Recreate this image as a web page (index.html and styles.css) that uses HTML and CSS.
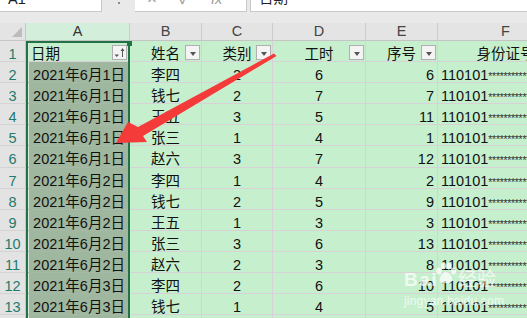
FILE: index.html
```html
<!DOCTYPE html>
<html lang="zh">
<head>
<meta charset="utf-8">
<title>Sheet</title>
<link rel="stylesheet" href="styles.css">
</head>
<body>
<div class="top">
  <div class="namebox">A1</div>
  <div class="dots"><span class="dot"></span></div>
  <div class="fbtns"><span class="fx1">×</span><span class="fx2">✓</span><span class="fx3">fx</span></div>
  <div class="fbox">日期</div>
</div>
<div class="band"></div>
<div class="sheet">
  <div class="corner"><span class="tri"></span></div>
  <div class="ch sel">A</div><div class="ch">B</div><div class="ch">C</div><div class="ch">D</div><div class="ch">E</div><div class="ch">F</div>

  <div class="rh">1</div>
  <div class="c s act hd lf">日期<span class="fb sort"><svg width="13" height="13" viewBox="0 0 13 13"><polygon points="1.5,8.5 6,8.5 3.75,11" fill="#555"/><line x1="9.5" y1="3" x2="9.5" y2="11" stroke="#555" stroke-width="1"/><polygon points="7.5,5 9.5,2 11.5,5" fill="#555"/></svg></span></div>
  <div class="c hd ctr">姓名<span class="fb"></span></div>
  <div class="c hd ctr">类别<span class="fb"></span></div>
  <div class="c hd ctr">工时<span class="fb"></span></div>
  <div class="c hd ctr">序号<span class="fb"></span></div>
  <div class="c hd ctr">身份证号</div>

  <div class="rh">2</div><div class="c s rt">2021年6月1日</div><div class="c ctr">李四</div><div class="c ctr">2</div><div class="c ctr">6</div><div class="c rt">6</div><div class="c id">110101<span class="st">************</span></div>
  <div class="rh">3</div><div class="c s rt">2021年6月1日</div><div class="c ctr">钱七</div><div class="c ctr">2</div><div class="c ctr">7</div><div class="c rt">7</div><div class="c id">110101<span class="st">************</span></div>
  <div class="rh">4</div><div class="c s rt">2021年6月1日</div><div class="c ctr">王五</div><div class="c ctr">3</div><div class="c ctr">5</div><div class="c rt">11</div><div class="c id">110101<span class="st">************</span></div>
  <div class="rh">5</div><div class="c s rt">2021年6月1日</div><div class="c ctr">张三</div><div class="c ctr">1</div><div class="c ctr">4</div><div class="c rt">1</div><div class="c id">110101<span class="st">************</span></div>
  <div class="rh">6</div><div class="c s rt">2021年6月1日</div><div class="c ctr">赵六</div><div class="c ctr">3</div><div class="c ctr">7</div><div class="c rt">12</div><div class="c id">110101<span class="st">************</span></div>
  <div class="rh">7</div><div class="c s rt">2021年6月2日</div><div class="c ctr">李四</div><div class="c ctr">1</div><div class="c ctr">4</div><div class="c rt">2</div><div class="c id">110101<span class="st">************</span></div>
  <div class="rh">8</div><div class="c s rt">2021年6月2日</div><div class="c ctr">钱七</div><div class="c ctr">2</div><div class="c ctr">5</div><div class="c rt">9</div><div class="c id">110101<span class="st">************</span></div>
  <div class="rh">9</div><div class="c s rt">2021年6月2日</div><div class="c ctr">王五</div><div class="c ctr">1</div><div class="c ctr">3</div><div class="c rt">3</div><div class="c id">110101<span class="st">************</span></div>
  <div class="rh">10</div><div class="c s rt">2021年6月2日</div><div class="c ctr">张三</div><div class="c ctr">3</div><div class="c ctr">6</div><div class="c rt">13</div><div class="c id">110101<span class="st">************</span></div>
  <div class="rh">11</div><div class="c s rt">2021年6月2日</div><div class="c ctr">赵六</div><div class="c ctr">2</div><div class="c ctr">3</div><div class="c rt">8</div><div class="c id">110101<span class="st">************</span></div>
  <div class="rh">12</div><div class="c s rt">2021年6月3日</div><div class="c ctr">李四</div><div class="c ctr">2</div><div class="c ctr">6</div><div class="c rt">10</div><div class="c id">110101<span class="st">************</span></div>
  <div class="rh">13</div><div class="c s rt">2021年6月3日</div><div class="c ctr">钱七</div><div class="c ctr">1</div><div class="c ctr">4</div><div class="c rt">5</div><div class="c id">110101<span class="st">************</span></div>
  <div class="rh">14</div><div class="c s rt"></div><div class="c"></div><div class="c"></div><div class="c"></div><div class="c"></div><div class="c"></div>

  <div class="selbox"><span class="handle"></span></div>
</div>

<svg class="arrow" width="527" height="318" viewBox="0 0 527 318">
  <polygon points="116,143 128,122 138,127 274,53.5 276.5,56 143,136 147,142" fill="#f53a3a"/>
</svg>

<div class="wm">
  <div class="wm-row">
    <span class="wm-bai">Bai</span>
    <svg class="wm-paw" width="22" height="24" viewBox="0 0 22 24">
      <ellipse cx="4" cy="9" rx="2.6" ry="3.4" fill="#fff"/>
      <ellipse cx="8.5" cy="3.8" rx="2.6" ry="3.4" fill="#fff"/>
      <ellipse cx="14" cy="3.8" rx="2.6" ry="3.4" fill="#fff"/>
      <ellipse cx="18.5" cy="9" rx="2.6" ry="3.4" fill="#fff"/>
      <path d="M11 10 C7 10 4 16 5 19 C6 22 9 21 11 21 C13 21 16 22 17 19 C18 16 15 10 11 10 Z" fill="#fff"/>
    </svg>
    <span class="wm-cn">经验</span>
  </div>
  <div class="wm-url">jingyan.baidu.com</div>
</div>
</body>
</html>
```

FILE: styles.css
```css
html, body {
  margin: 0;
  padding: 0;
}
body {
  width: 527px;
  height: 318px;
  overflow: hidden;
  position: relative;
  background: #e9e9e9;
  font-family: "Liberation Sans", "Noto Sans CJK SC", sans-serif;
  font-size: 14.5px;
  color: #111;
}

/* formula bar (partially scrolled off the top) */
.top {
  display: flex;
  height: 24px;
  margin-top: -12px;
  line-height: 16px;
}
.namebox {
  box-sizing: border-box;
  width: 102px;
  background: #fff;
  border-right: 1px solid #c8c8c8;
  border-bottom: 1px solid #c8c8c8;
  padding: 2.5px 0 0 8px;
  color: #222;
}
.dots {
  width: 33px;
  display: flex;
  justify-content: center;
  padding-top: 14px;
  box-sizing: border-box;
}
.dot {
  width: 2px;
  height: 2px;
  background: #8a8a8a;
}
.fbtns {
  box-sizing: border-box;
  width: 112px;
  background: #fff;
  border-bottom: 1px solid #c8c8c8;
  border-right: 1px solid #c8c8c8;
  display: flex;
  padding: 2.5px 0 0 12px;
  color: #9a9a9a;
}
.fx1 { font-size: 17px; }
.fx2 { margin-left: 22px; font-size: 16px; }
.fx3 { margin-left: 21px; font-style: italic; }
.fbox {
  flex: 1;
  margin-left: 3px;
  background: #fff;
  border-left: 1px solid #c8c8c8;
  border-bottom: 1px solid #c8c8c8;
  padding: 2px 0 0 8px;
  color: #222;
}
.band {
  height: 11px;
}

/* sheet grid */
.sheet {
  position: relative;
  display: grid;
  grid-template-columns: 26px 104px 72px 71px 93px 72px 136px;
  grid-template-rows: 18px repeat(14, 21.1px);
}
.sheet > div {
  box-sizing: border-box;
}
.corner {
  background: #e4e4e4;
  border-right: 1px solid #c6c6c6;
  border-bottom: 1px solid #c6c6c6;
  position: relative;
}
.tri {
  position: absolute;
  right: 3px;
  bottom: 3px;
  width: 0;
  height: 0;
  border-left: 10px solid transparent;
  border-bottom: 10px solid #bcbcbc;
}
.ch {
  background: #e4e4e4;
  border-right: 1px solid #cbcbcb;
  border-bottom: 1px solid #c4c4c4;
  text-align: center;
  line-height: 17px;
  color: #444;
}
.ch.sel {
  background: #d3eedb;
  color: #333;
}
.rh {
  background: #e3e3e3;
  border-right: 1px solid #c6c6c6;
  border-bottom: 1px solid #d3d3d3;
  text-align: center;
  padding-top: 5px;
  line-height: 16px;
  color: #1f7a6c;
}
.c {
  position: relative;
  background: #c6efce;
  border-right: 1px solid #d8d2d8;
  border-bottom: 1px solid #d8d2d8;
  padding-top: 5px;
  line-height: 16px;
  white-space: nowrap;
  overflow: hidden;
}
.ctr { text-align: center; }
.rt { text-align: right; padding-right: 3px; }
.lf { text-align: left; padding-left: 5px; }
.id { padding-left: 3px; overflow: visible; }
.st {
  font-size: 10.5px;
  letter-spacing: -0.3px;
  color: #333;
}
.s {
  background: #a0b79f;
  border-bottom-color: #a6b9a6;
  box-shadow: inset 3px 0 0 #dfeadf;
  padding-right: 4px;
}
.s.act {
  background: #c6efce;
  border-bottom-color: #d8d2d8;
}

/* filter buttons */
.fb {
  position: absolute;
  right: 1px;
  top: 4px;
  width: 15px;
  height: 15px;
  box-sizing: border-box;
  border: 1px solid #b0b0b0;
  background: #f4f4f4;
}
.fb::after {
  content: "";
  position: absolute;
  left: 3.5px;
  top: 5.5px;
  border-left: 3.5px solid transparent;
  border-right: 3.5px solid transparent;
  border-top: 4px solid #555;
}
.fb.sort {
  right: 2px;
}
.fb.sort::after {
  display: none;
}
.fb.sort svg {
  display: block;
}

/* selection overlay */
.selbox {
  position: absolute;
  left: 26px;
  top: 18px;
  width: 104px;
  height: 300px;
  border: 2px solid #217346;
  border-bottom: none;
  pointer-events: none;
}
.handle {
  position: absolute;
  left: 99px;
  top: -2px;
  width: 5px;
  height: 5px;
  background: #217346;
}

/* annotation arrow */
.arrow {
  position: absolute;
  left: 0;
  top: 0;
  pointer-events: none;
}

/* watermark */
.wm {
  position: absolute;
  left: 404px;
  top: 262px;
  color: #fff;
  opacity: 0.72;
  pointer-events: none;
}
.wm-row {
  display: flex;
  align-items: flex-end;
}
.wm-bai {
  font-family: "Liberation Sans", sans-serif;
  font-weight: bold;
  font-size: 19px;
  letter-spacing: 1.5px;
  line-height: 20px;
}
.wm-paw {
  margin-left: -3px;
  margin-bottom: 4px;
}
.wm-cn {
  font-family: "Noto Sans CJK SC", sans-serif;
  font-size: 19px;
  line-height: 24px;
  margin-left: 1px;
}
.wm-url {
  font-size: 12px;
  line-height: 14px;
  margin-top: 4px;
  letter-spacing: 0.2px;
}
```
